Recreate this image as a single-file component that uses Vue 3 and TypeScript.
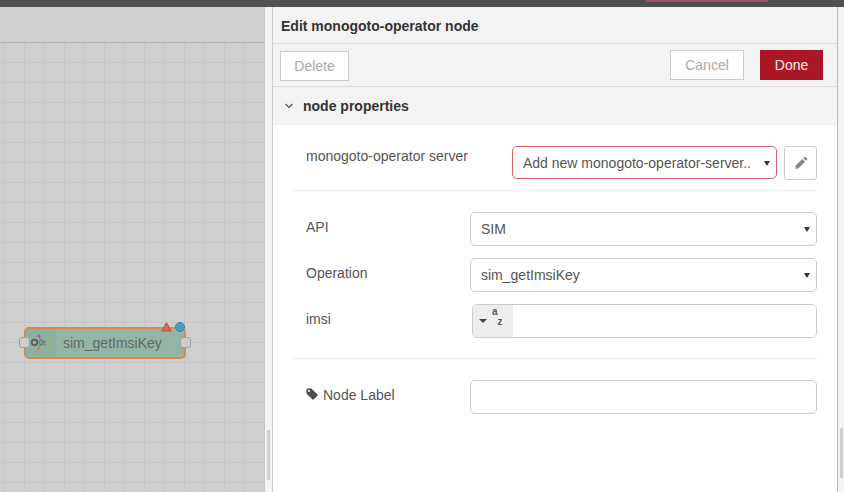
<script setup lang="ts">
import { ref } from "vue";

const server = ref("new");
const api = ref("SIM");
const operation = ref("sim_getImsiKey");
const imsi = ref("");
const nodeLabel = ref("");
</script>

<template>
  <div class="page">
    <header class="topbar">
      <span class="deploy"></span>
    </header>
    <div class="main">
      <section class="canvas">
        <div class="canvas-head"></div>
        <div class="grid"></div>
        <div class="node">
          <div class="node-icon">
            <svg width="30" height="28" viewBox="0 0 30 28">
              <circle cx="9.5" cy="13.5" r="2.8" fill="none" stroke="#565e5a" stroke-width="1.7" />
              <circle cx="16.5" cy="13.5" r="2.6" fill="none" stroke="#66716d" stroke-width="1" />
              <path d="M14 7l2.5 6.5M16.5 13.5l7-1.5M16.5 13.5l6 3.5M16.5 13.5l-4 8" stroke="#6c7773" stroke-width=".8" fill="none" />
              <circle cx="14" cy="7" r="1.6" fill="#a7659a" />
              <circle cx="23.5" cy="12" r="1.8" fill="#9fb56a" />
              <circle cx="22.5" cy="17" r="1.2" fill="#c2b15a" />
              <circle cx="12.5" cy="21.5" r="1.7" fill="#c9965a" />
            </svg>
          </div>
          <span class="node-name">sim_getImsiKey</span>
          <span class="port port-in"></span>
          <span class="port port-out"></span>
          <svg class="node-warn" width="11" height="10" viewBox="0 0 11 10">
            <path d="M5.5 1L10 9H1Z" fill="#d8734f" stroke="#b35a44" stroke-width="1.2" stroke-linejoin="round" />
          </svg>
          <span class="node-changed"></span>
        </div>
      </section>

      <div class="sep"><span class="thumb"></span></div>

      <section class="tray">
        <div class="tray-title">Edit monogoto-operator node</div>
        <div class="tray-actions">
          <button class="btn" type="button">Delete</button>
          <span class="spacer"></span>
          <button class="btn btn-cancel" type="button">Cancel</button>
          <button class="btn btn-done" type="button">Done</button>
        </div>
        <div class="section-head">
          <svg width="10" height="6" viewBox="0 0 10 6">
            <path d="M1.5 1l3.5 3.5L8.5 1" fill="none" stroke="#555" stroke-width="1.2" />
          </svg>
          <span>node properties</span>
        </div>
        <form class="form" @submit.prevent>
          <div class="row row-server">
            <label class="server-label">monogoto-operator server</label>
            <div class="select">
              <select v-model="server" class="field field-error">
                <option value="new">Add new monogoto-operator-server..</option>
              </select>
              <span class="select-arrow"></span>
            </div>
            <button class="edit" type="button">
              <svg width="14" height="14" viewBox="0 0 14 14">
                <path d="M1 13l.7-3.5 6.6-6.6 2.8 2.8-6.6 6.6zM9.2 2l1-1a1 1 0 0 1 1.3 0l1.5 1.5a1 1 0 0 1 0 1.3l-1 1z" fill="#858585" />
                <path d="M1 13l.5-2.3 1.8 1.8z" fill="#c9b48c" />
              </svg>
            </button>
          </div>
          <hr class="divider" />
          <div class="row">
            <label>API</label>
            <div class="select">
              <select v-model="api" class="field">
                <option>SIM</option>
              </select>
              <span class="select-arrow"></span>
            </div>
          </div>
          <div class="row">
            <label>Operation</label>
            <div class="select">
              <select v-model="operation" class="field">
                <option>sim_getImsiKey</option>
              </select>
              <span class="select-arrow"></span>
            </div>
          </div>
          <div class="row">
            <label>imsi</label>
            <div class="typed field-box">
              <span class="typed-btn">
                <span class="caret"></span>
                <span class="az"><b>a</b><b>z</b></span>
              </span>
              <input v-model="imsi" type="text" />
            </div>
          </div>
          <hr class="divider divider-low" />
          <div class="row">
            <label class="tag-label">
              <svg width="12" height="12" viewBox="0 0 12 12">
                <path d="M.5 1.6A1.1 1.1 0 0 1 1.6.5h3.3c.4 0 .8.2 1 .4l5.4 5.4c.5.5.5 1.1 0 1.6l-3.4 3.4c-.5.5-1.1.5-1.6 0L.9 5.9c-.2-.2-.4-.6-.4-1zM3 2a1 1 0 1 0 0 2 1 1 0 0 0 0-2z" fill="#4d4d4d" fill-rule="evenodd" />
              </svg>
              <span class="tag-text">Node Label</span>
            </label>
            <input v-model="nodeLabel" class="field-box plain" type="text" />
          </div>
        </form>
      </section>

      <div class="edge"><span class="thumb"></span></div>
    </div>
  </div>
</template>

<style scoped>
.page {
  width: 844px;
  height: 492px;
  display: flex;
  flex-direction: column;
  overflow: hidden;
  font-family: "Liberation Sans", Arial, sans-serif;
  font-size: 14px;
  color: #555;
}

.topbar {
  height: 7px;
  flex: none;
  background: #505050;
  position: relative;
}

.deploy {
  position: absolute;
  left: 646px;
  top: 0;
  width: 122px;
  height: 2px;
  background: #985560;
}

.main {
  flex: 1;
  display: flex;
  min-height: 0;
}

.canvas {
  width: 265px;
  flex: none;
  display: flex;
  flex-direction: column;
  position: relative;
  background: #cfcfcf;
}

.canvas-head {
  height: 35px;
  flex: none;
  border-bottom: 1px solid #b4b4b4;
}

.grid {
  flex: 1;
  background-image:
    linear-gradient(to right, #c6c6c6 1px, transparent 1px),
    linear-gradient(to bottom, #c6c6c6 1px, transparent 1px);
  background-size: 20px 20px;
  background-position: 4px 19px;
}

.node {
  position: absolute;
  left: 24px;
  top: 320px;
  width: 162px;
  height: 32px;
  box-sizing: border-box;
  display: flex;
  align-items: center;
  border: 2px solid #d58b4f;
  border-radius: 5px;
  background: #93b5a5;
}

.node-icon {
  width: 30px;
  height: 100%;
  flex: none;
  background: #8eb0a0;
  border-right: 1px solid #8cae9e;
  box-sizing: border-box;
}

.node-icon svg {
  display: block;
  margin-left: -1px;
}

.node-name {
  margin-left: 7px;
  color: #5f6a6a;
}

.port {
  position: absolute;
  top: 8px;
  width: 11px;
  height: 11px;
  box-sizing: border-box;
  background: #cdcdcd;
  border: 1px solid #a0a0a0;
  border-radius: 3px;
}

.port-in {
  left: -7px;
}

.port-out {
  right: -7px;
}

.node-warn {
  position: absolute;
  right: 12px;
  top: -7px;
}

.node-changed {
  position: absolute;
  right: -1px;
  top: -7px;
  width: 10px;
  height: 10px;
  box-sizing: border-box;
  border-radius: 50%;
  background: #3ea3cc;
  border: 1px solid #4c7f96;
}

.sep {
  width: 7px;
  flex: none;
  background: #f3f3f3;
  border-right: 1px solid #cfcfcf;
  position: relative;
}

.sep .thumb {
  left: 2px;
  top: 423px;
  height: 50px;
}

.thumb {
  position: absolute;
  width: 3px;
  background: #cfcfcf;
}

.tray {
  width: 564px;
  flex: none;
  display: flex;
  flex-direction: column;
  background: #fff;
}

.tray-title {
  height: 37px;
  flex: none;
  box-sizing: border-box;
  padding: 11px 0 0 8px;
  background: #f3f3f3;
  border-bottom: 1px solid #dbdbdb;
  font-weight: bold;
  color: #333;
}

.tray-actions {
  height: 43px;
  flex: none;
  box-sizing: border-box;
  display: flex;
  align-items: center;
  padding: 0 14px 0 7px;
  background: #f3f3f3;
  border-bottom: 1px solid #dbdbdb;
}

.spacer {
  flex: 1;
}

.btn {
  height: 30px;
  margin-top: 1px;
  width: 69px;
  padding: 0;
  box-sizing: border-box;
  background: #fff;
  border: 1px solid #ccc;
  font: inherit;
  color: #aaa;
}

.btn-cancel {
  width: 74px;
  margin-top: 0;
}

.btn-done {
  width: 63px;
  margin-top: 0;
  margin-left: 16px;
  background: #ad1625;
  border-color: #ad1625;
  color: #eee;
}

.section-head {
  height: 38px;
  flex: none;
  display: flex;
  align-items: center;
  gap: 9px;
  padding-left: 11px;
  box-sizing: border-box;
  background: #f3f3f3;
  font-weight: bold;
  color: #333;
}

.form {
  padding: 21px 20px 0;
}

.row {
  display: flex;
  align-items: flex-start;
  height: 34px;
  margin-bottom: 12px;
  padding-left: 13px;
}

.row label {
  width: 164px;
  flex: none;
  padding-top: 7px;
}

.row-server {
  height: 33px;
  margin-bottom: 11px;
}

.row .server-label {
  width: 206px;
  padding-top: 2px;
}

.select {
  flex: 1;
  min-width: 0;
  height: 100%;
  position: relative;
}

.select-arrow {
  position: absolute;
  right: 7px;
  top: 50%;
  margin-top: -2px;
  width: 0;
  height: 0;
  border-left: 3.5px solid transparent;
  border-right: 3.5px solid transparent;
  border-top: 5px solid #333;
  pointer-events: none;
}

.field {
  display: block;
  width: 100%;
  height: 100%;
  box-sizing: border-box;
  padding: 0 20px 0 10px;
  appearance: none;
  background: #fff;
  border: 1px solid #ccc;
  border-radius: 5px;
  font: inherit;
  color: #555;
  outline: none;
}

.field-error {
  border-color: #d6615f;
}

.edit {
  width: 33px;
  height: 34px;
  flex: none;
  margin-left: 7px;
  padding: 0;
  box-sizing: border-box;
  display: flex;
  align-items: center;
  justify-content: center;
  background: #fff;
  border: 1px solid #ccc;
  border-radius: 3px;
}

.divider {
  height: 1px;
  margin: 0 0 21px;
  border: none;
  background: #eee;
}

.divider-low {
  margin-top: 20px;
}

.field-box {
  flex: 1;
  min-width: 0;
  height: 34px;
  box-sizing: border-box;
  background: #fff;
  border: 1px solid #ccc;
  border-radius: 5px;
}

.plain {
  outline: none;
}

.typed {
  display: flex;
  margin-left: 2px;
  overflow: hidden;
}

.typed-btn {
  width: 40px;
  flex: none;
  display: flex;
  align-items: center;
  gap: 5px;
  padding-left: 6px;
  box-sizing: border-box;
  background: #eee;
}

.caret {
  width: 0;
  height: 0;
  border-left: 4px solid transparent;
  border-right: 4px solid transparent;
  border-top: 4px solid #444;
}

.az {
  display: flex;
  align-items: flex-start;
  font-size: 10px;
  line-height: 8px;
  color: #555;
}

.az b:first-child {
  margin-top: -8px;
}

.az b:last-child {
  margin-top: 2px;
}

.typed input {
  flex: 1;
  min-width: 0;
  border: none;
  outline: none;
}

.tag-label {
  display: block;
}

.tag-text {
  margin-left: 5px;
}

.edge {
  flex: 1;
  background: #f3f3f3;
  border-left: 1px solid #b9b9b9;
  position: relative;
}

.edge .thumb {
  left: 2px;
  top: 421px;
  height: 50px;
}
</style>

<style>
html,
body {
  margin: 0;
  overflow: hidden;
}
</style>
